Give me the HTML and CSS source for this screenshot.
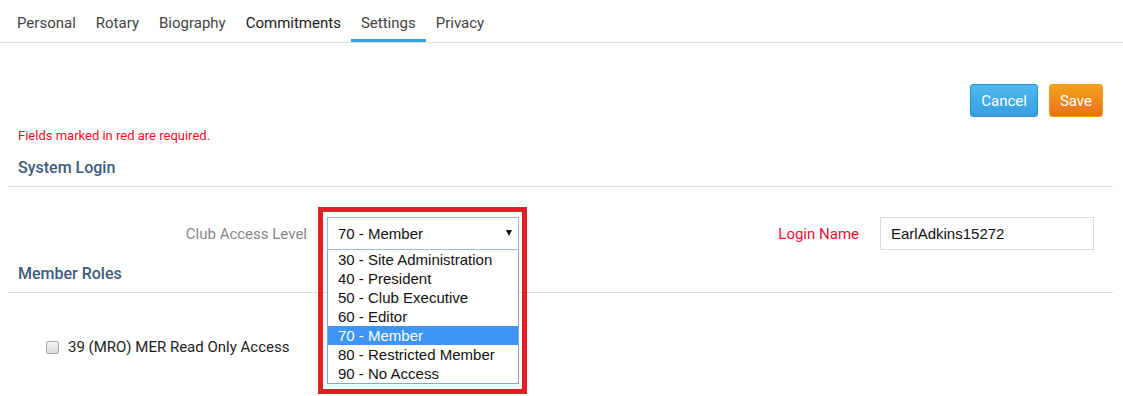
FILE: index.html
```html
<!DOCTYPE html>
<html lang="en">
<head>
    <meta charset="UTF-8">
    <title>Member Settings</title>
    <link rel="stylesheet" href="styles.css">
</head>
<body>
    <ul class="tabs">
        <li><a href="#">Personal</a></li>
        <li><a href="#">Rotary</a></li>
        <li><a href="#">Biography</a></li>
        <li><a href="#" class="hover">Commitments</a></li>
        <li><a href="#" class="active">Settings</a></li>
        <li><a href="#">Privacy</a></li>
    </ul>

    <div class="page">
        <div class="toolbar">
            <button class="btn btn-cancel">Cancel</button>
            <button class="btn btn-save">Save</button>
        </div>

        <p class="required-note">Fields marked in red are required.</p>

        <h3 class="section-title">System Login</h3>
        <div class="form-row">
            <label class="field-label">Club Access Level</label>
            <div class="dropdown">
                <div class="select">
                    <span>70 - Member</span>
                    <span class="caret"></span>
                </div>
                <ul class="options">
                    <li>30 - Site Administration</li>
                    <li>40 - President</li>
                    <li>50 - Club Executive</li>
                    <li>60 - Editor</li>
                    <li class="selected">70 - Member</li>
                    <li>80 - Restricted Member</li>
                    <li>90 - No Access</li>
                </ul>
                <div class="highlight-frame"></div>
            </div>
            <label class="field-label required">Login Name</label>
            <input class="text-input" type="text" value="EarlAdkins15272">
        </div>

        <h3 class="section-title">Member Roles</h3>
        <div class="roles">
            <label class="role"><span class="checkbox"></span>39 (MRO) MER Read Only Access</label>
        </div>
    </div>
</body>
</html>
```

FILE: styles.css
```css
html, body {
    height: 100%;
}

body {
    margin: 0;
    font-family: Roboto, "Liberation Sans", sans-serif;
    color: #333;
    background: #fff;
}

/* tabs */
.tabs {
    list-style: none;
    margin: 0;
    padding: 0 0 0 7px;
    display: flex;
    border-bottom: 1px solid #ddd;
}

.tabs a {
    display: block;
    padding: 13px 10px 6px;
    line-height: 20px;
    font-size: 15px;
    color: #444;
    text-decoration: none;
    border-bottom: 3px solid transparent;
}

.tabs a.hover {
    color: #1a1a1a;
}

.tabs a.active {
    border-bottom-color: #3a9ddc;
}

.page {
    margin: 0 10px 0 8px;
}

/* buttons */
.toolbar {
    display: flex;
    justify-content: flex-end;
    gap: 11px;
    padding-top: 41px;
    padding-right: 10px;
}

.btn {
    font-family: Roboto, "Liberation Sans", sans-serif;
    font-size: 15px;
    color: #fff;
    height: 33px;
    padding: 0 10px;
    border-radius: 3px;
    cursor: pointer;
}

.btn-cancel {
    background: linear-gradient(#4fb9ef, #379fe0);
    border: 1px solid #2e8fcf;
}

.btn-save {
    background: linear-gradient(#f3a218, #e9711d);
    border: 1px solid #f09a1a;
}

.required-note {
    margin: 11px 0 0 10px;
    font-size: 13px;
    line-height: 16px;
    color: #ee1122;
}

.section-title {
    margin: 14px 0 0;
    padding: 0 10px 8px;
    font-size: 16px;
    font-weight: 500;
    line-height: 20px;
    color: #3d5b7c;
    border-bottom: 1px solid #ddd;
}

/* form */
.form-row {
    display: flex;
    align-items: center;
    margin-top: 30px;
    margin-bottom: 12px;
    height: 33px;
}

.field-label {
    font-size: 15px;
    color: #888;
    text-align: right;
}

.form-row > .field-label:first-child {
    width: 299px;
    margin-right: 20px;
}

.field-label.required {
    flex: 1;
    color: #ee1133;
    margin-right: 21px;
}

.dropdown {
    position: relative;
    width: 192px;
    height: 33px;
    font-family: "Liberation Sans", Arial, sans-serif;
    font-size: 15px;
    color: #111;
}

.select {
    box-sizing: border-box;
    height: 33px;
    display: flex;
    align-items: center;
    justify-content: space-between;
    padding: 0 6px 0 10px;
    border: 1px solid #9fb8e6;
    background: #fff;
}

.caret {
    width: 0;
    height: 0;
    border-left: 3px solid transparent;
    border-right: 3px solid transparent;
    border-top: 6px solid #111;
    margin-bottom: 2px;
}

.options {
    position: absolute;
    top: 33px;
    left: 0;
    width: 192px;
    box-sizing: border-box;
    margin: 0;
    padding: 0;
    list-style: none;
    background: #fff;
    border: 1px solid #8aa3d6;
    border-top: none;
    z-index: 2;
}

.options li {
    height: 19px;
    line-height: 19px;
    padding-left: 10px;
    white-space: nowrap;
}

.options li.selected {
    background: #3d95f6;
    color: #fff;
}

.highlight-frame {
    position: absolute;
    top: -10px;
    left: -9px;
    width: 199px;
    height: 177px;
    border: 5px solid #e81c24;
    z-index: 3;
}

.text-input {
    box-sizing: border-box;
    width: 214px;
    height: 33px;
    padding: 0 10px;
    border: 1px solid #ddd;
    font-family: "Liberation Sans", Arial, sans-serif;
    font-size: 15px;
    color: #111;
    margin-right: 19px;
}

/* roles */
.roles {
    padding: 45px 0 0 38px;
}

.role {
    display: flex;
    align-items: center;
    font-size: 15px;
    color: #222;
}

.checkbox {
    width: 11px;
    height: 11px;
    border: 1px solid #a8a8a8;
    border-radius: 2px;
    background: linear-gradient(#f4f4f4, #dcdcdc);
    margin-right: 9px;
}
```
